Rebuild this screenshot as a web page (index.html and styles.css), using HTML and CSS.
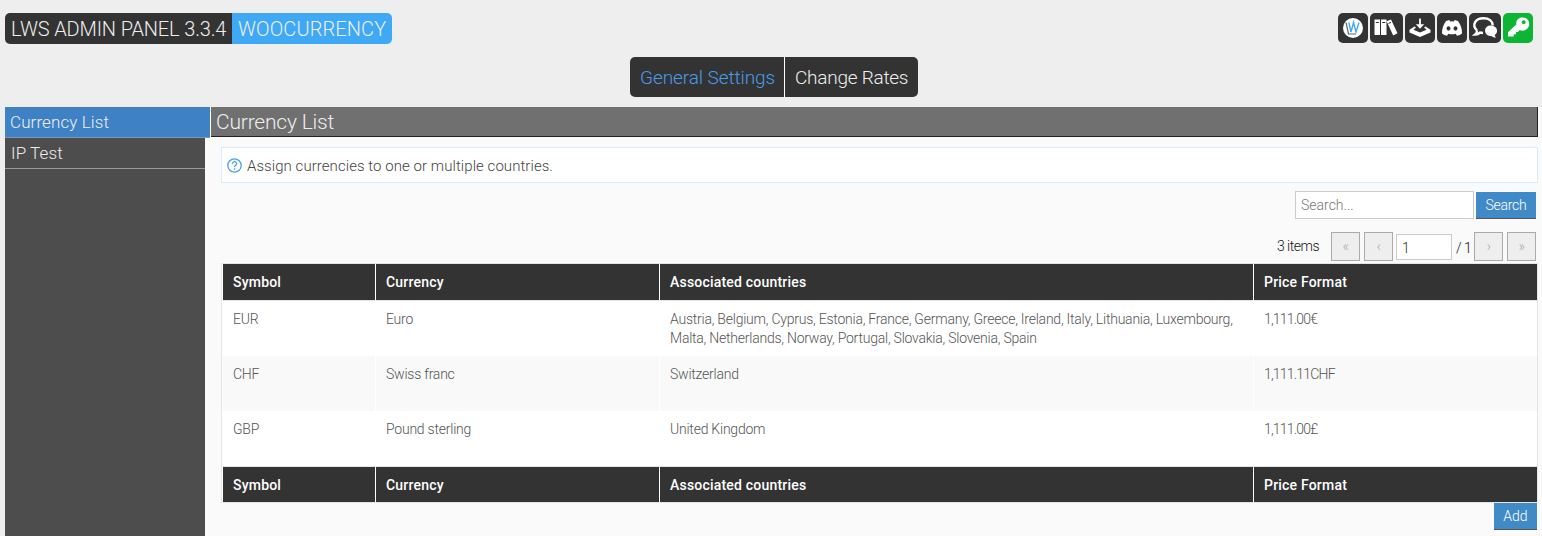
FILE: index.html
```
<!DOCTYPE html>
<html lang="en">
<head>
<meta charset="utf-8">
<title>LWS Admin Panel</title>
<link rel="stylesheet" href="styles.css">
</head>
<body>
<header class="top">
  <div class="brand"><span class="brand-name">LWS ADMIN PANEL 3.3.4</span><span class="brand-plugin">WOOCURRENCY</span></div>
  <nav class="tools">
    <a class="tool"><svg viewBox="0 0 30 30"><circle cx="15" cy="15" r="10" fill="#fff"/><path d="M8 9.500l2.500 11.500h7.500" fill="none" stroke="#666" stroke-width="1.200"/><path d="M10.800 9.500l2.200 9.500 2.500-9.500 2.500 9.500 3-9.500" fill="none" stroke="#3fa9f5" stroke-width="1.400"/></svg></a>
    <a class="tool wide"><svg viewBox="0 0 33 30"><path fill="#fff" d="M4.500 6.500h5.500v15.500H4.500zM11 6.500h5.500v15.500H11zM16.600 8.200l4.400-1.700 6.500 13.800-4.300 2.100z"/><path stroke="#333" d="M5.800 9.500h3M12.300 9.500h3M18.500 10.500l2.500-1.100"/></svg></a>
    <a class="tool"><svg viewBox="0 0 30 30"><path d="M15 5.500v7" stroke="#fff" stroke-width="1.800"/><path fill="#fff" d="M10.800 11.300h8.400L15 15.800zM9.500 13.500l-5 3.300v2.700L15 24l10.500-4.500v-2.700l-5-3.300-1.500 1 2.500 2.300-6.500 2.600-6.500-2.600 2.500-2.300z"/></svg></a>
    <a class="tool"><svg viewBox="0 0 30 30"><path fill="#fff" fill-rule="evenodd" d="M9 8l3.300-1 .8 1.500q1.900-.3 3.800 0L17.700 7 21 8q4.300 6 4 12.500-2 1.700-5 2.300l-1.300-2q-3.700 1.100-7.400 0l-1.300 2q-3-.6-5-2.300Q4.700 14 9 8zM11.500 13.300a2 2.200 0 1 0 .01 0zM18.500 13.300a2 2.200 0 1 0 .01 0z"/></svg></a>
    <a class="tool mid"><svg viewBox="0 0 32 30"><path d="M8 17.500C2.500 12 6 5.300 14.500 5.300c5.500 0 9 3 9.300 7M8 17.500q0 2.500-1.800 4 3-.1 4.800-1.900l3 .4" fill="none" stroke="#fff" stroke-width="2.400"/><path fill="#fff" d="M21.500 12.500c7 0 8.500 7 4.200 9.500q0 1.200 1.500 2.500-3 .2-4.800-1.500c-8 .5-8.500-10.500-.9-10.500z"/></svg></a>
    <a class="tool key"><svg viewBox="0 0 30 30"><path fill="#fff" fill-rule="evenodd" d="M19 4.500a6.500 6.500 0 0 1 1.500 13q-2 .4-3.800-.4L15 19h-2v2.200h-2.300v2.300H5v-4.200l8.300-7.900C12.700 7.500 15.500 4.500 19 4.500zM20.700 7.300a1.900 1.900 0 1 0 .01 0z"/></svg></a>
  </nav>
</header>
<nav class="tabs"><a class="tab active">General Settings</a><a class="tab">Change Rates</a></nav>
<div class="layout">
  <aside class="side"><a class="side-item current">Currency List</a><a class="side-item">IP Test</a></aside>
  <main class="main">
    <h1 class="heading">Currency List</h1>
    <div class="content">
      <p class="help"><svg class="help-icon" viewBox="0 0 15 15"><circle cx="7.500" cy="7.500" r="6.700"/><path d="M5.400 5.800c0-3 4.400-2.800 4.300-.1-.1 1.500-2.200 1.500-2.200 3.200M7.500 10.300v1.400"/></svg><span class="help-text">Assign currencies to one or multiple countries.</span></p>
      <div class="search"><input class="search-box" type="text" placeholder="Search..."><button class="btn search-btn">Search</button></div>
      <div class="pager"><span class="count">3 items</span><span class="page-btn">«</span><span class="page-btn prev">‹</span><input class="page-num" type="text" value="1"><span class="total">/ 1</span><span class="page-btn">›</span><span class="page-btn">»</span></div>
      <table class="list">
        <colgroup><col class="c1"><col class="c2"><col class="c3"><col class="c4"></colgroup>
        <thead><tr><th>Symbol</th><th>Currency</th><th>Associated countries</th><th>Price Format</th></tr></thead>
        <tbody>
          <tr><td>EUR</td><td>Euro</td><td>Austria, Belgium, Cyprus, Estonia, France, Germany, Greece, Ireland, Italy, Lithuania, Luxembourg,<br>Malta, Netherlands, Norway, Portugal, Slovakia, Slovenia, Spain</td><td class="price">1,111.00€</td></tr>
          <tr class="alt"><td>CHF</td><td>Swiss franc</td><td>Switzerland</td><td class="price">1,111.11CHF</td></tr>
          <tr><td>GBP</td><td>Pound sterling</td><td>United Kingdom</td><td class="price">1,111.00£</td></tr>
        </tbody>
        <tfoot><tr><th>Symbol</th><th>Currency</th><th>Associated countries</th><th>Price Format</th></tr></tfoot>
      </table>
      <div class="actions"><button class="btn add-btn">Add</button></div>
    </div>
  </main>
</div>
</body>
</html>
```

FILE: styles.css
```
* { box-sizing: border-box; }
body { margin: 0; height: 536px; overflow: hidden; background: #eee; display: flex; flex-direction: column; font-family: Roboto, "Liberation Sans", sans-serif; font-weight: 300; font-size: 14px; color: #333; }
input, button { font: inherit; margin: 0; border-radius: 0; outline: none; }
.top { display: flex; justify-content: space-between; align-items: flex-start; height: 57px; padding: 13px 9px 0 5px; }
.brand { display: flex; height: 31px; line-height: 33px; font-size: 20px; border-radius: 5px; overflow: hidden; color: #eee; white-space: nowrap; }
.brand-name { width: 227px; padding-left: 6px; background: #333; letter-spacing: -0.15px; }
.brand-plugin { width: 160px; padding-left: 6px; background: #3fa9f5; letter-spacing: 0.1px; }
.tools { display: flex; gap: 2px; }
.tool { width: 30px; height: 30px; border-radius: 5px; background: #333; }
.tool svg { display: block; width: 100%; height: 30px; }
.tool.wide { width: 33px; }
.tool.mid { width: 32px; }
.tool.key { background: #0cb533; }
.tabs { display: flex; align-self: flex-start; margin-left: 630px; width: 288px; height: 40px; gap: 1px; line-height: 41px; font-size: 19px; letter-spacing: -0.08px; background: #fff; border-radius: 5px; overflow: hidden; white-space: nowrap; }
.tab { flex: 0 0 154px; padding-left: 10px; background: #333; color: #eee; }
.tab + .tab { flex-basis: 133px; letter-spacing: -0.25px; }
.tab.active { color: #4a9bea; }
.layout { display: flex; flex: 1; margin-top: 10px; padding-left: 5px; }
.side { width: 200px; background: #4d4d4d; font-size: 17px; letter-spacing: 0.1px; }
.side-item { display: block; height: 31px; line-height: 31px; padding-left: 6px; color: #eee; border-bottom: 1px solid #999; }
.side-item.current { position: relative; width: 205px; padding-left: 5px; background: #3f81c5; border-bottom-color: #7c99b8; }
.main { flex: 1; background: #fafafa; padding-right: 4px; }
.heading { margin: 0 0 0 6px; height: 30px; border: solid #222; border-width: 0 1px 1px 0; box-shadow: -1px 0 #fff; padding-left: 5px; background: #707070; color: #eee; font-weight: 300; font-size: 21px; line-height: 30px; letter-spacing: -0.2px; }
.content { padding: 10px 0 0 16px; }
.help { display: flex; align-items: center; gap: 5px; margin: 0; height: 36px; padding-left: 5px; border: 1px solid #d8ebf8; background: #fff; color: #444; font-size: 15px; letter-spacing: 0.06px; }
.help-text { padding-top: 2px; }
.help-icon { width: 15px; height: 15px; fill: none; stroke: #4a9ff0; stroke-width: 1.3; }
.search { display: flex; justify-content: flex-end; gap: 2px; padding: 8px 2px 0 0; }
.search-box { width: 179px; height: 28px; border: 1px solid #ccc; background: #fff; padding: 0 5px; color: #333; }
.search-box::placeholder { color: #777; opacity: 1; }
.btn { border: 0; border-bottom: 1px solid #555; background: #3f8ac7; color: #fff; padding: 0; }
.search-btn { width: 60px; height: 27px; margin-top: 1px; letter-spacing: -0.25px; }
.pager { display: flex; justify-content: flex-end; align-items: flex-start; height: 44px; padding: 13px 2px 0 0; line-height: 29px; letter-spacing: -0.5px; }
.count { margin-right: 12px; color: #111; }
.page-btn { width: 29px; height: 29px; margin-right: 4px; border: 1px solid #aaa; background: #eee; color: #aaa; text-align: center; line-height: 27px; }
.page-btn:last-child { margin-right: 0; }
.page-btn.prev { margin-right: 3px; }
.page-num { width: 56px; height: 26px; margin-top: 2px; border: 1px solid #ccc; background: #fff; padding: 2px 5px 0; color: #333; }
.total { width: 22px; padding: 2px 0 0 4px; white-space: nowrap; color: #111; }
.list { table-layout: fixed; width: 1317px; border-collapse: separate; border-spacing: 0; border: 1px solid #e5e5e5; background: #fff; }
.c1 { width: 153px; } .c2 { width: 284px; } .c3 { width: 594px; }
.list th { height: 36px; padding: 0 0 0 10px; background: #333; color: #fff; font-weight: 500; letter-spacing: 0.2px; text-align: left; border-left: 1px solid #fff; }
.list td { height: 55px; padding: 9px 0 0 10px; vertical-align: top; color: #555; line-height: 19px; letter-spacing: -0.23px; border-left: 1px solid #fff; white-space: nowrap; }
.list .alt td { background: #f9f9f9; }
.list .price { letter-spacing: -0.8px; }
.list tbody tr:first-child td { height: 56px; border-top: 1px solid #e5e5e5; }
.list tbody tr:last-child td { height: 56px; border-bottom: 1px solid #e5e5e5; }
.list tfoot th { height: 35px; }
.actions { display: flex; justify-content: flex-end; padding-right: 1px; }
.add-btn { width: 43px; height: 27px; }
```
